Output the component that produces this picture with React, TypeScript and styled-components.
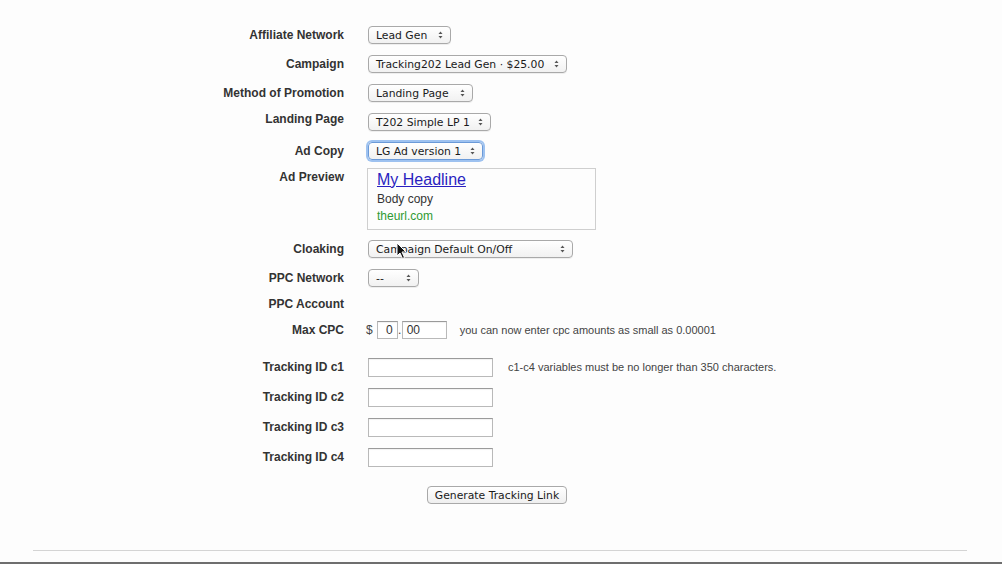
import React from "react";
import styled, { createGlobalStyle, css } from "styled-components";

const Global = createGlobalStyle`
  html, body { margin: 0; padding: 0; background: #fdfdfd; }
  body { font-family: "Liberation Sans", Arial, sans-serif; color: #333; }
`;

const Page = styled.div`
  position: relative;
  height: 564px;
  display: flex;
  flex-direction: column;
  overflow: hidden;
  padding-top: 20px;
  box-sizing: border-box;
`;

const Form = styled.div`
  display: flex;
  flex-direction: column;
`;

const Row = styled.div<{ $h: number; $mt?: number; $top?: boolean }>`
  display: flex;
  align-items: ${(p) => (p.$top ? "flex-start" : "center")};
  height: ${(p) => p.$h}px;
  margin-top: ${(p) => p.$mt ?? 0}px;
  gap: 24px;
  ${(p) =>
    p.$top &&
    css`
      padding-top: 3px;
      box-sizing: border-box;
    `}
`;

const Label = styled.div<{ $pt?: number; $dy?: number }>`
  width: 344px;
  flex: none;
  text-align: right;
  font-weight: bold;
  font-size: 12px;
  color: #333;
  padding-top: ${(p) => p.$pt ?? 0}px;
  margin-top: ${(p) => (p.$dy ? p.$dy * 2 : 0)}px;
`;

const Control = styled.div`
  display: flex;
  align-items: center;
  gap: 0;
`;

const SelectBox = styled.div<{ $w: number; $focus?: boolean }>`
  position: relative;
  width: ${(p) => p.$w}px;
  height: 18px;
  box-sizing: border-box;
  border: 1px solid #a9a9a9;
  border-radius: 4px;
  background: linear-gradient(#ffffff, #f1f1f1);
  box-shadow: 0 1px 0 rgba(0, 0, 0, 0.06);
  font-family: "DejaVu Sans", "Lucida Grande", sans-serif;
  font-size: 10.8px;
  color: #1a1a1a;
  line-height: 17px;
  padding-left: 7px;
  white-space: nowrap;
  ${(p) =>
    p.$focus &&
    css`
      border-color: #6b9ad8;
      box-shadow: 0 0 0 2px #9ec2f0;
    `}
`;

const Arrows = styled.svg`
  position: absolute;
  right: 7px;
  top: 4px;
`;

const Select: React.FC<{ w: number; focus?: boolean; children: React.ReactNode }> = ({ w, focus, children }) => (
  <SelectBox $w={w} $focus={focus}>
    {children}
    <Arrows width="5" height="8" viewBox="0 0 5 8">
      <path d="M2.5 0.5 L4.5 3 L0.5 3 Z" fill="#555" />
      <path d="M2.5 7.5 L4.5 5 L0.5 5 Z" fill="#555" />
    </Arrows>
  </SelectBox>
);

const Preview = styled.div`
  width: 229px;
  height: 62px;
  box-sizing: border-box;
  border: 1px solid #cfcfcf;
  margin-left: -1px;
  padding: 1px 0 0 9px;
  display: flex;
  flex-direction: column;
`;

const Headline = styled.a`
  font-size: 16px;
  color: #2a1fc0;
  text-decoration: underline;
  line-height: 19px;
`;

const Body = styled.div`
  font-size: 12px;
  color: #333;
  line-height: 17px;
  margin-top: 2px;
`;

const Url = styled.div`
  font-size: 12px;
  color: #2e9a32;
  line-height: 17px;
`;

const TextInput = styled.div<{ $w: number; $h?: number; $align?: string }>`
  width: ${(p) => p.$w}px;
  height: ${(p) => p.$h ?? 19}px;
  box-sizing: border-box;
  border: 1px solid #b9b9b9;
  border-top-color: #9a9a9a;
  background: #fff;
  box-shadow: inset 0 1px 1px rgba(0, 0, 0, 0.06);
  font-size: 12px;
  color: #333;
  line-height: 16px;
  padding: 0 4px;
  text-align: ${(p) => p.$align ?? "left"};
`;

const Dollar = styled.span`
  font-size: 12px;
  color: #444;
  margin: 0 4px 0 -2px;
`;

const Dot = styled.span`
  font-size: 12px;
  color: #444;
  width: 4px;
  text-align: center;
`;

const Note = styled.span<{ $ml: number }>`
  font-size: 11px;
  color: #444;
  margin-left: ${(p) => p.$ml}px;
`;

const ButtonRow = styled.div`
  display: flex;
  height: 30px;
  margin-top: 8px;
  align-items: center;
  padding-left: 427px;
`;

const Button = styled.button`
  width: 140px;
  height: 18px;
  box-sizing: border-box;
  border: 1px solid #a9a9a9;
  border-radius: 4px;
  background: linear-gradient(#ffffff, #efefef);
  font-family: "DejaVu Sans", "Lucida Grande", sans-serif;
  font-size: 10.8px;
  color: #1a1a1a;
  padding: 1px 0 0;
  line-height: 16px;
`;

const Rule = styled.hr`
  margin: 0 35px 0 33px;
  border: none;
  border-top: 1px solid #d4d4d4;
  margin-top: 40px;
`;

const Spacer = styled.div`
  flex: 1;
`;

const BottomBar = styled.div`
  height: 2px;
  background: #6e6e6e;
`;

const Cursor = styled.svg`
  position: absolute;
  left: 396px;
  top: 242px;
`;

export default function App() {
  return (
    <>
      <Global />
      <Page>
        <Form>
          <Row $h={29}>
            <Label>Affiliate Network</Label>
            <Select w={83}>Lead Gen</Select>
          </Row>
          <Row $h={29}>
            <Label>Campaign</Label>
            <Select w={199}>Tracking202 Lead Gen · $25.00</Select>
          </Row>
          <Row $h={29}>
            <Label>Method of Promotion</Label>
            <Select w={105}>Landing Page</Select>
          </Row>
          <Row $h={29}>
            <Label $dy={-3}>Landing Page</Label>
            <Select w={123}>T202 Simple LP 1</Select>
          </Row>
          <Row $h={29}>
            <Label>Ad Copy</Label>
            <Select w={115} focus>
              LG Ad version 1
            </Select>
          </Row>
          <Row $h={69} $top>
            <Label $pt={2}>Ad Preview</Label>
            <Preview>
              <Headline href="#">My Headline</Headline>
              <Body>Body copy</Body>
              <Url>theurl.com</Url>
            </Preview>
          </Row>
          <Row $h={29}>
            <Label>Cloaking</Label>
            <Select w={205}>Campaign Default On/Off</Select>
          </Row>
          <Row $h={29}>
            <Label>PPC Network</Label>
            <Select w={51}>--</Select>
          </Row>
          <Row $h={23}>
            <Label>PPC Account</Label>
          </Row>
          <Row $h={29}>
            <Label>Max CPC</Label>
            <Control>
              <Dollar>$</Dollar>
              <TextInput $w={21} $h={18} $align="right">0</TextInput>
              <Dot>.</Dot>
              <TextInput $w={45} $h={18}>00</TextInput>
              <Note $ml={13}>you can now enter cpc amounts as small as 0.00001</Note>
            </Control>
          </Row>
          <Row $h={30} $mt={8}>
            <Label>Tracking ID c1</Label>
            <Control>
              <TextInput $w={125} />
              <Note $ml={15}>c1-c4 variables must be no longer than 350 characters.</Note>
            </Control>
          </Row>
          <Row $h={30}>
            <Label>Tracking ID c2</Label>
            <TextInput $w={125} />
          </Row>
          <Row $h={30}>
            <Label>Tracking ID c3</Label>
            <TextInput $w={125} />
          </Row>
          <Row $h={30}>
            <Label>Tracking ID c4</Label>
            <TextInput $w={125} />
          </Row>
          <ButtonRow>
            <Button>Generate Tracking Link</Button>
          </ButtonRow>
        </Form>
        <Rule />
        <Spacer />
        <BottomBar />
        <Cursor width="12" height="18" viewBox="0 0 12 18">
          <path d="M1 1 L1 14 L4 11 L6.5 16.5 L8.5 15.5 L6 10 L10 10 Z" fill="#111" stroke="#fff" strokeWidth="1" />
        </Cursor>
      </Page>
    </>
  );
}
